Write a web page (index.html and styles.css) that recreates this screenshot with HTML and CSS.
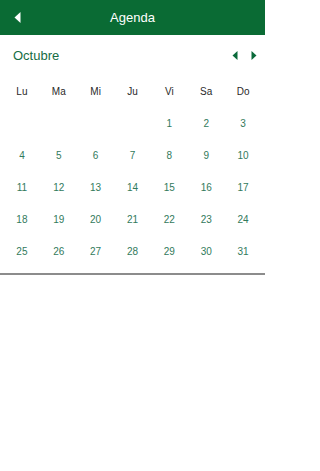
FILE: index.html
```html
<!DOCTYPE html>
<html lang="es">
<head>
<meta charset="utf-8">
<meta name="viewport" content="width=265">
<title>Agenda</title>
<link rel="stylesheet" href="styles.css">
</head>
<body>
<div class="app">
<header class="topbar">
  <button class="back" aria-label="Atrás">
    <svg width="7" height="11" viewBox="0 0 7 11"><polygon points="6.5,0 6.5,11 0.5,5.5" fill="#fff"/></svg>
  </button>
  <h1 class="title">Agenda</h1>
</header>
<section class="calendar">
  <div class="month-row">
    <span class="month">Octubre</span>
    <div class="nav">
      <svg width="6" height="9" viewBox="0 0 6 9"><polygon points="5.5,0 5.5,9 0.5,4.5" fill="#0b6a3a"/></svg>
      <svg width="6" height="9" viewBox="0 0 6 9"><polygon points="0.5,0 0.5,9 5.5,4.5" fill="#0b6a3a"/></svg>
    </div>
  </div>
  <div class="grid">
    <div class="dow">Lu</div><div class="dow">Ma</div><div class="dow">Mi</div><div class="dow">Ju</div><div class="dow">Vi</div><div class="dow">Sa</div><div class="dow">Do</div>
    <div class="day"></div><div class="day"></div><div class="day"></div><div class="day"></div><div class="day">1</div><div class="day">2</div><div class="day">3</div>
    <div class="day">4</div><div class="day">5</div><div class="day">6</div><div class="day">7</div><div class="day">8</div><div class="day">9</div><div class="day">10</div>
    <div class="day">11</div><div class="day">12</div><div class="day">13</div><div class="day">14</div><div class="day">15</div><div class="day">16</div><div class="day">17</div>
    <div class="day">18</div><div class="day">19</div><div class="day">20</div><div class="day">21</div><div class="day">22</div><div class="day">23</div><div class="day">24</div>
    <div class="day">25</div><div class="day">26</div><div class="day">27</div><div class="day">28</div><div class="day">29</div><div class="day">30</div><div class="day">31</div>
  </div>
</section>
</div>
</body>
</html>
```
FILE: styles.css
```css
html, body {
  margin: 0;
  padding: 0;
  background: #fff;
  font-family: "Liberation Sans", Arial, sans-serif;
}
.app {
  width: 265px;
}
.topbar {
  height: 35px;
  background: #0a6b34;
  display: flex;
  align-items: center;
  justify-content: center;
  position: relative;
}
.back {
  position: absolute;
  left: 14px;
  top: 12px;
  padding: 0;
  border: 0;
  background: none;
  display: flex;
}
.title {
  margin: 0;
  color: #fff;
  font-size: 13px;
  font-weight: normal;
}
.calendar {
  border-bottom: 2px solid #8c8c8c;
  padding-bottom: 6px;
}
.month-row {
  height: 40px;
  display: flex;
  align-items: center;
  justify-content: space-between;
  padding: 0 8px 0 13px;
}
.month {
  color: #166d44;
  font-size: 13px;
}
.nav {
  display: flex;
  gap: 13px;
  align-items: center;
}
.grid {
  display: grid;
  grid-template-columns: repeat(7, 1fr);
  grid-auto-rows: 32px;
  padding: 0 3.5px;
}
.dow, .day {
  display: flex;
  align-items: center;
  justify-content: center;
  font-size: 10px;
}
.dow {
  color: #2a2a2a;
}
.day {
  color: #327a5c;
}
```
